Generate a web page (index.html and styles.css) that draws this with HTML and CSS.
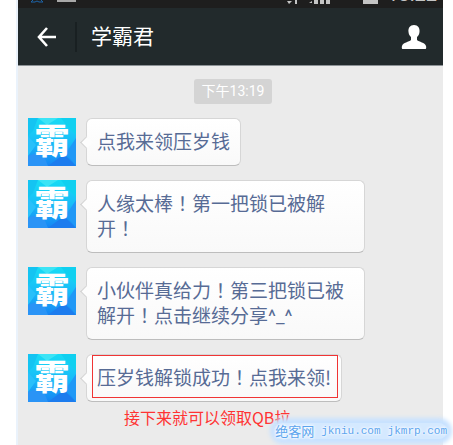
FILE: index.html
```html
<!DOCTYPE html>
<html lang="zh-CN">
<head>
  <meta charset="UTF-8" />
  <meta name="viewport" content="width=device-width, initial-scale=1.0"/>
  <title>学霸君</title>
  <link rel="stylesheet" href="styles.css">
</head>
<body>
  <svg class="defs" aria-hidden="true">
    <defs>
      <linearGradient id="sky" x1="0" y1="0" x2="0" y2="1">
        <stop offset="0" stop-color="#18dcf4"/>
        <stop offset="0.5" stop-color="#18bdf8"/>
        <stop offset="1" stop-color="#1684f4"/>
      </linearGradient>
      <symbol id="facets" viewBox="0 0 48 48">
        <rect width="48" height="48" fill="url(#sky)"/>
        <path d="M0 0h10L5 13 0 18z" fill="#14c4f2"/>
        <path d="M10 0h20L19 7z" fill="#3ce4f6"/>
        <path d="M33 0h15v17L38 7z" fill="#10d0f0"/>
        <path d="M0 18L8 27 0 38z" fill="#28c0fa"/>
        <path d="M0 38L14 33 20 48H0z" fill="#2a94f6"/>
        <path d="M20 48L36 36 48 48z" fill="#1c7cee"/>
        <path d="M48 20v28L38 35z" fill="#2098f6"/>
      </symbol>
    </defs>
  </svg>

  <div class="phone">
    <div class="status-bar">
      <svg class="status-left" width="60" height="8" viewBox="0 0 60 8">
        <path d="M15 0l-2 2h4l2-1 2 1h4l-2-2" fill="none" stroke="#1d64a8" stroke-width="1"/>
        <path d="M39 0h19v2H39z" fill="#a8a8a8"/>
      </svg>
      <svg class="status-icons" width="92" height="8" viewBox="0 0 92 8">
        <path d="M0 1h5L2 4zM8 0h2v4H8zM22 3l3-2v2zM27 0h4v4h-4zM33 0h4v4h-4zM39 0h4v4h-4z" fill="#c4c4c4"/>
        <path d="M76 0h15v4H76z" fill="#c4c4c4"/>
      </svg>
      <span class="clock">13:22</span>
    </div>

    <header class="title-bar">
      <button class="icon-button back" aria-label="返回">
        <svg width="20" height="20" viewBox="0 0 20 20">
          <path d="M10 1L2 10l8 9M2 10h17" fill="none" stroke="#fff" stroke-width="2.6"/>
        </svg>
      </button>
      <h1>学霸君</h1>
      <button class="icon-button profile" aria-label="个人资料">
        <svg width="26" height="26" viewBox="0 0 26 26">
          <path d="M13 1c4 0 6 3 5.500 7-.3 3-1.500 4-2.500 5v3c2 2 8 2.500 9 6 .4 1.500.2 3-.5 3h-23c-.7 0-.9-1.500-.5-3 1-3.500 7-4 9-6v-3c-1-1-2.200-2-2.500-5C7 4 9 1 13 1z" fill="#fff"/>
        </svg>
      </button>
    </header>

    <main class="chat">
      <time class="timestamp">下午13:19</time>

      <div class="message">
        <div class="avatar"><svg viewBox="0 0 48 48"><use href="#facets"/></svg><span>霸</span></div>
        <a href="#" class="bubble">点我来领压岁钱</a>
      </div>
      <div class="message">
        <div class="avatar"><svg viewBox="0 0 48 48"><use href="#facets"/></svg><span>霸</span></div>
        <a href="#" class="bubble">人缘太棒<span class="stop" lang="zh-TW">！</span>第一把锁已被解开<span class="stop" lang="zh-TW">！</span></a>
      </div>
      <div class="message">
        <div class="avatar"><svg viewBox="0 0 48 48"><use href="#facets"/></svg><span>霸</span></div>
        <a href="#" class="bubble">小伙伴真给力<span class="stop" lang="zh-TW">！</span>第三把锁已被解开<span class="stop" lang="zh-TW">！</span>点击继续分享<span class="latin">^_^</span></a>
      </div>
      <div class="message">
        <div class="avatar"><svg viewBox="0 0 48 48"><use href="#facets"/></svg><span>霸</span></div>
        <a href="#" class="bubble marked">压岁钱解锁成功<span class="stop" lang="zh-TW">！</span>点我来领!</a>
      </div>

      <p class="note">接下来就可以领取QB拉</p>
    </main>
  </div>

  <div class="watermark"><span class="site-name">绝客网</span><span>jkniu.com</span><span>jkmrp.com</span></div>
</body>
</html>
```

FILE: styles.css
```css
* {
  box-sizing: border-box;
}

body {
  margin: 0;
  min-height: 100vh;
  display: flex;
  padding: 0 10px 0 16px;
  background: #fff;
  font-family: "Noto Sans CJK SC", sans-serif;
  overflow: hidden;
}

.defs {
  position: absolute;
  width: 0;
  height: 0;
}

.phone {
  flex: 1;
  min-width: 0;
  border-left: 2px solid #eaf2fb;
  background: #ebebeb;
}

/* status bar, scrolled mostly out of view */
.status-bar {
  display: flex;
  align-items: flex-end;
  height: 8px;
  padding-right: 6px;
  background: #1e1e1e;
  overflow: hidden;
}

.status-icons {
  margin-left: auto;
}

.clock {
  margin-left: 8px;
  padding-bottom: 4px;
  font-family: Roboto, sans-serif;
  font-size: 20px;
  line-height: 20px;
  color: #c4c4c4;
}

.title-bar {
  display: flex;
  align-items: center;
  height: 58px;
  background: #222a2c;
  border-bottom: 1px solid #8c9296;
}

.icon-button {
  display: flex;
  align-items: center;
  justify-content: center;
  padding: 0;
  border: none;
  background: none;
  cursor: pointer;
}

.back {
  width: 59px;
  height: 30px;
  border-right: 2px solid #192022;
}

.title-bar h1 {
  flex: 1;
  margin: 0;
  padding: 0 0 4px 14px;
  font-size: 21px;
  line-height: 30px;
  font-weight: 400;
  color: #fff;
}

.profile {
  width: 26px;
  margin-right: 16px;
}

.chat {
  display: flex;
  flex-direction: column;
  padding: 13px 10px 0;
}

.timestamp {
  align-self: center;
  margin: 0 0 14px 5px;
  padding: 0 8px;
  border-radius: 3px;
  background: #d4d4d4;
  font-family: Roboto, "Noto Sans CJK SC", sans-serif;
  font-size: 14px;
  line-height: 25px;
  color: #fff;
}

.message {
  display: flex;
  align-items: flex-start;
  margin-bottom: 14px;
}

.avatar {
  display: grid;
  width: 48px;
  height: 48px;
  flex: none;
}

.avatar svg,
.avatar span {
  grid-area: 1 / 1;
}

.avatar span {
  font-size: 35px;
  line-height: 42px;
  font-weight: 900;
  text-align: center;
  color: #fff;
}

.bubble {
  position: relative;
  max-width: 279px;
  margin-left: 10px;
  padding: 9px 10px 12px;
  border: 1px solid #d6d6d6;
  border-bottom-color: #bdbdbd;
  border-radius: 6px;
  background: linear-gradient(#fff, #f9f9f9);
  font-size: 19px;
  line-height: 25px;
  color: #576b95;
  text-decoration: none;
}

.bubble::before {
  content: "";
  position: absolute;
  left: -5px;
  top: 19px;
  width: 8px;
  height: 8px;
  border-left: 1px solid #cfcfcf;
  border-bottom: 1px solid #cfcfcf;
  background: #fdfdfd;
  transform: rotate(45deg);
}

/* centred full-width exclamation mark */
.stop {
  font-family: "Noto Sans CJK TC", sans-serif;
}

.latin {
  font-family: Roboto, sans-serif;
  line-height: 16px;
}

/* red frame over the last message */
.marked::after {
  content: "";
  position: absolute;
  inset: 0 3px 3px 5px;
  border: 1px solid #f03434;
}

.note {
  margin: -11px 0 0 96px;
  font-size: 16px;
  line-height: 24px;
  color: #f33;
}

.watermark {
  position: absolute;
  right: 6px;
  bottom: 6px;
  display: flex;
  gap: 7px;
  border-radius: 8px;
  background: #d4e9ff;
  box-shadow: 0 0 4px 5px #c8e2ff;
  font-family: "Liberation Mono", monospace;
  font-size: 11px;
  line-height: 16px;
  color: #5ba4ee;
  text-shadow: 0 0 2px #fff, 0 0 3px #fff, 0 0 4px #fff;
}

.site-name {
  font-family: "Noto Sans CJK SC", sans-serif;
  font-size: 13px;
}
```
